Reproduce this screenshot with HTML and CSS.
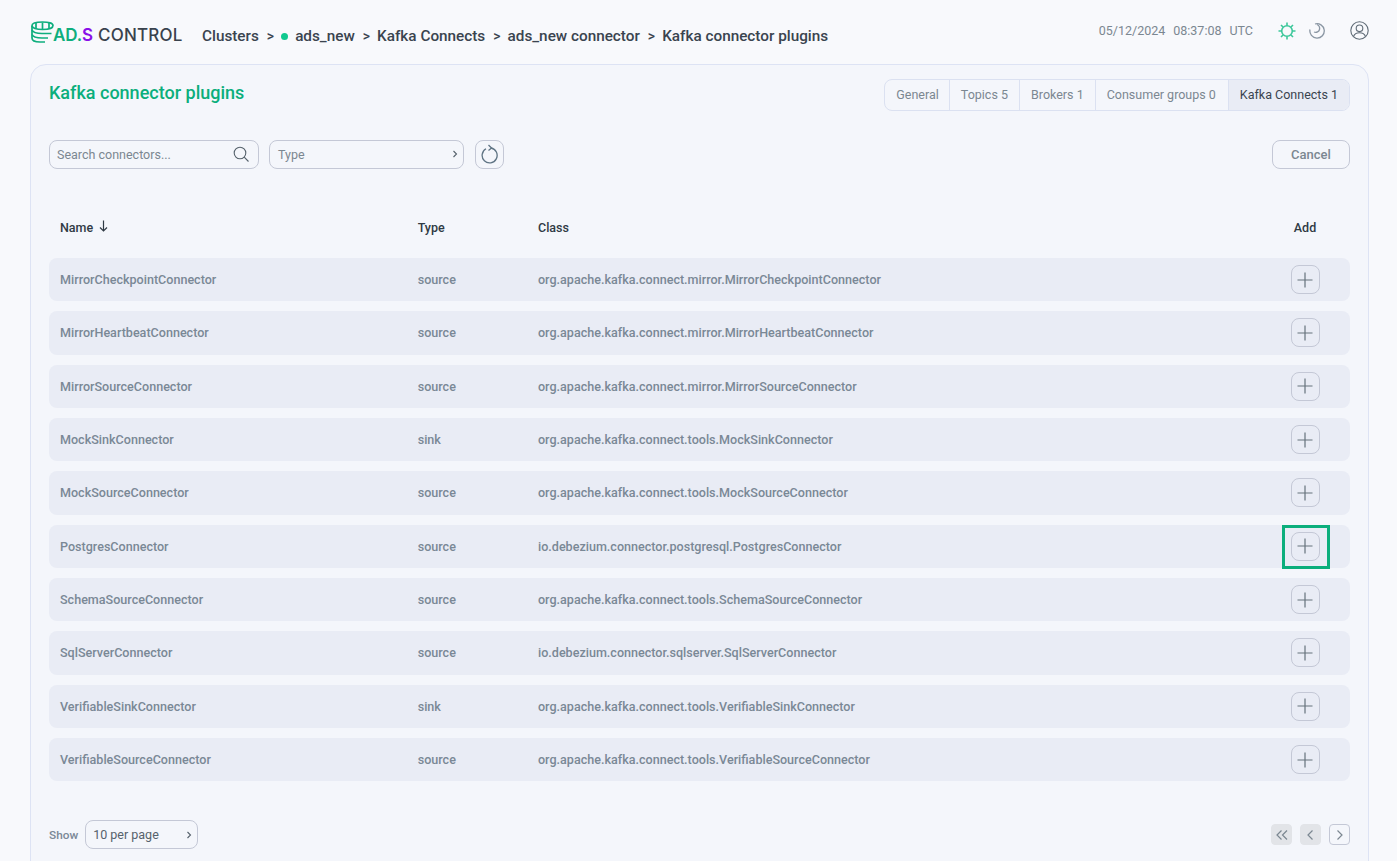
FILE: index.html
```html
<!DOCTYPE html>
<html lang="en">
<head>
    <meta charset="UTF-8">
    <meta name="viewport" content="width=device-width, initial-scale=1.0">
    <title>Kafka connector plugins</title>
    <link rel="stylesheet" href="styles.css">
</head>
<body>

<header class="header">
    <div class="logo">
        <svg class="logo-icon" width="23" height="22" viewBox="0 0 23 22" fill="none" stroke="#0fae7d" stroke-width="1.700">
            <path d="M1 4.500C1 2 5.500 1 11.500 1S22 2 22 4.500 17.500 8.500 11.500 8.500 1 7 1 4.500z"/>
            <path d="M5 2v5.500M11.500 1.500V8M18 2v5.500"/>
            <path d="M1 5v12c0 2.500 3.500 4 8 4h5"/>
            <path d="M1 9c1 2.500 5 3.500 10 3.500h9.500M1 13.500c1 2.500 5 3.500 10 3.500h6"/>
        </svg>
        <span class="logo-ad">AD.</span><span class="logo-s">S</span><span class="logo-control">CONTROL</span>
    </div>
    <nav class="crumbs">
        <span>Clusters</span><span class="sep">&gt;</span>
        <span class="status-dot"></span><span>ads_new</span><span class="sep">&gt;</span>
        <span>Kafka Connects</span><span class="sep">&gt;</span>
        <span>ads_new connector</span><span class="sep">&gt;</span>
        <span>Kafka connector plugins</span>
    </nav>
    <div class="header-right">
        <span class="clock">05/12/2024</span>
        <span class="clock">08:37:08</span>
        <span class="clock">UTC</span>
        <svg class="sun" width="18" height="18" viewBox="0 0 18 18" fill="none" stroke="#3cc79a" stroke-width="1.600">
            <circle cx="9" cy="9" r="5.300"/>
            <path d="M9 0.500V3.500M9 14.500v3M0.500 9H3.500M14.500 9h3M3 3l2 2M13 13l2 2M15 3l-2 2M5 13l-2 2"/>
        </svg>
        <svg class="moon" width="16" height="16" viewBox="0 0 16 16" fill="none" stroke="#8a96a3" stroke-width="1.300">
            <path d="M6 1a7.200 7.200 0 1 1-5 5.500"/>
            <path d="M8 1.500c2 1 3 3 2.500 5S7.500 10 5 9"/>
        </svg>
        <svg class="user" width="19" height="19" viewBox="0 0 19 19" fill="none" stroke="#5f6b76" stroke-width="1.100">
            <circle cx="9.500" cy="9.500" r="8.700"/>
            <circle cx="9.500" cy="7.300" r="3.300"/>
            <path d="M3.500 15.500c1-2.700 3.200-3.700 6-3.700s5 1 6 3.700"/>
        </svg>
    </div>
</header>

<main class="card">
    <div class="card-top">
        <h1>Kafka connector plugins</h1>
        <div class="tabs">
            <div class="tab">General</div>
            <div class="tab">Topics 5</div>
            <div class="tab">Brokers 1</div>
            <div class="tab">Consumer groups 0</div>
            <div class="tab tab-active">Kafka Connects 1</div>
        </div>
    </div>

    <div class="toolbar">
        <div class="field field-search">
            <span>Search connectors...</span>
            <svg width="16" height="16" viewBox="0 0 16 16" fill="none" stroke="#56626c" stroke-width="1.100">
                <circle cx="7" cy="7" r="5.800"/>
                <path d="M11.200 11.200 15.500 15.500"/>
            </svg>
        </div>
        <div class="field field-type">
            <span>Type</span>
            <svg class="chevron" width="6" height="8" viewBox="0 0 6 8" fill="none" stroke="#56626c" stroke-width="1.100"><path d="M1.500 1 4.500 4 1.500 7"/></svg>
        </div>
        <button class="icon-btn refresh">
            <svg width="18" height="20" viewBox="0 0 18 20" fill="none" stroke="#5f7484" stroke-width="1.300">
                <path d="M5 4.800A7.500 7.500 0 1 0 10 4"/>
                <path d="M7.500 1 10.500 4 7.500 6.500"/>
            </svg>
        </button>
        <button class="cancel">Cancel</button>
    </div>

    <div class="table-head">
        <div class="col-name">Name <svg class="sort" width="9" height="12" viewBox="0 0 9 12" fill="none" stroke="#2f3a44" stroke-width="1.200"><path d="M4.500 0.500V11M1 7.500 4.500 11 8 7.500"/></svg></div>
        <div class="col-type">Type</div>
        <div class="col-class">Class</div>
        <div class="col-add">Add</div>
    </div>

    <div class="rows">
        <div class="row">
            <div class="col-name">MirrorCheckpointConnector</div><div class="col-type">source</div>
            <div class="col-class">org.apache.kafka.connect.mirror.MirrorCheckpointConnector</div>
            <div class="col-add"><button class="add-btn"><svg width="16" height="16" viewBox="0 0 16 16" stroke="#66727c" stroke-width="1.200"><path d="M8 0.500V15.500M0.500 8H15.500"/></svg></button></div>
        </div>
        <div class="row">
            <div class="col-name">MirrorHeartbeatConnector</div><div class="col-type">source</div>
            <div class="col-class">org.apache.kafka.connect.mirror.MirrorHeartbeatConnector</div>
            <div class="col-add"><button class="add-btn"><svg width="16" height="16" viewBox="0 0 16 16" stroke="#66727c" stroke-width="1.200"><path d="M8 0.500V15.500M0.500 8H15.500"/></svg></button></div>
        </div>
        <div class="row">
            <div class="col-name">MirrorSourceConnector</div><div class="col-type">source</div>
            <div class="col-class">org.apache.kafka.connect.mirror.MirrorSourceConnector</div>
            <div class="col-add"><button class="add-btn"><svg width="16" height="16" viewBox="0 0 16 16" stroke="#66727c" stroke-width="1.200"><path d="M8 0.500V15.500M0.500 8H15.500"/></svg></button></div>
        </div>
        <div class="row">
            <div class="col-name">MockSinkConnector</div><div class="col-type">sink</div>
            <div class="col-class">org.apache.kafka.connect.tools.MockSinkConnector</div>
            <div class="col-add"><button class="add-btn"><svg width="16" height="16" viewBox="0 0 16 16" stroke="#66727c" stroke-width="1.200"><path d="M8 0.500V15.500M0.500 8H15.500"/></svg></button></div>
        </div>
        <div class="row">
            <div class="col-name">MockSourceConnector</div><div class="col-type">source</div>
            <div class="col-class">org.apache.kafka.connect.tools.MockSourceConnector</div>
            <div class="col-add"><button class="add-btn"><svg width="16" height="16" viewBox="0 0 16 16" stroke="#66727c" stroke-width="1.200"><path d="M8 0.500V15.500M0.500 8H15.500"/></svg></button></div>
        </div>
        <div class="row">
            <div class="col-name">PostgresConnector</div><div class="col-type">source</div>
            <div class="col-class">io.debezium.connector.postgresql.PostgresConnector</div>
            <div class="col-add"><button class="add-btn"><svg width="16" height="16" viewBox="0 0 16 16" stroke="#66727c" stroke-width="1.200"><path d="M8 0.500V15.500M0.500 8H15.500"/></svg></button><div class="highlight"></div></div>
        </div>
        <div class="row">
            <div class="col-name">SchemaSourceConnector</div><div class="col-type">source</div>
            <div class="col-class">org.apache.kafka.connect.tools.SchemaSourceConnector</div>
            <div class="col-add"><button class="add-btn"><svg width="16" height="16" viewBox="0 0 16 16" stroke="#66727c" stroke-width="1.200"><path d="M8 0.500V15.500M0.500 8H15.500"/></svg></button></div>
        </div>
        <div class="row">
            <div class="col-name">SqlServerConnector</div><div class="col-type">source</div>
            <div class="col-class">io.debezium.connector.sqlserver.SqlServerConnector</div>
            <div class="col-add"><button class="add-btn"><svg width="16" height="16" viewBox="0 0 16 16" stroke="#66727c" stroke-width="1.200"><path d="M8 0.500V15.500M0.500 8H15.500"/></svg></button></div>
        </div>
        <div class="row">
            <div class="col-name">VerifiableSinkConnector</div><div class="col-type">sink</div>
            <div class="col-class">org.apache.kafka.connect.tools.VerifiableSinkConnector</div>
            <div class="col-add"><button class="add-btn"><svg width="16" height="16" viewBox="0 0 16 16" stroke="#66727c" stroke-width="1.200"><path d="M8 0.500V15.500M0.500 8H15.500"/></svg></button></div>
        </div>
        <div class="row">
            <div class="col-name">VerifiableSourceConnector</div><div class="col-type">source</div>
            <div class="col-class">org.apache.kafka.connect.tools.VerifiableSourceConnector</div>
            <div class="col-add"><button class="add-btn"><svg width="16" height="16" viewBox="0 0 16 16" stroke="#66727c" stroke-width="1.200"><path d="M8 0.500V15.500M0.500 8H15.500"/></svg></button></div>
        </div>
    </div>

    <div class="pager">
        <span class="show-label">Show</span>
        <div class="field field-size">
            <span>10 per page</span>
            <svg class="chevron" width="6" height="8" viewBox="0 0 6 8" fill="none" stroke="#56626c" stroke-width="1.100"><path d="M1.500 1 4.500 4 1.500 7"/></svg>
        </div>
        <div class="page-btns">
            <button class="page-btn page-off"><svg width="12" height="10" viewBox="0 0 12 10" fill="none" stroke="#7b8791" stroke-width="1.200"><path d="M5.500 0.500 1 5 5.500 9.500M11 0.500 6.500 5 11 9.500"/></svg></button>
            <button class="page-btn page-off"><svg width="7" height="10" viewBox="0 0 7 10" fill="none" stroke="#7b8791" stroke-width="1.200"><path d="M5.500 0.500 1 5 5.500 9.500"/></svg></button>
            <button class="page-btn"><svg width="7" height="10" viewBox="0 0 7 10" fill="none" stroke="#7b8791" stroke-width="1.200"><path d="M1.500 0.500 6 5 1.500 9.500"/></svg></button>
        </div>
    </div>
</main>

</body>
</html>
```

FILE: styles.css
```css
* {
    box-sizing: border-box;
}
html, body {
    height: 100%;
}
body {
    margin: 0;
    height: 861px;
    overflow: hidden;
    background-color: #f8f9fc;
    font-family: Roboto, "Liberation Sans", sans-serif;
    font-size: 13px;
    font-weight: 500;
    color: #7a8896;
}
button {
    font-family: inherit;
    padding: 0;
    background: none;
    cursor: pointer;
}

.header {
    height: 64px;
    display: flex;
    align-items: flex-start;
    padding: 0 28px 0 31px;
}
.logo {
    width: 171px;
    height: 22px;
    margin-top: 21px;
    display: flex;
    align-items: flex-end;
    font-family: Inter, sans-serif;
    font-size: 17px;
    line-height: 18px;
    letter-spacing: -0.1px;
}
.logo-icon {
    margin-right: -1px;
    flex: none;
}
.logo-ad {
    color: #0fae7d;
    font-weight: 600;
    margin-bottom: -1px;
}
.logo-s {
    color: #8a10e8;
    font-weight: 600;
    margin-bottom: -1px;
}
.logo-control {
    color: #39424d;
    margin-left: 5px;
    margin-bottom: -1px;
    letter-spacing: 0.2px;
}
.crumbs {
    margin-top: 27px;
    display: flex;
    align-items: center;
    font-size: 15.300px;
    line-height: 18px;
    color: #3a444f;
}
.sep {
    margin: 0 7px 0 8px;
    font-size: 14px;
}
.status-dot {
    width: 7px;
    height: 7px;
    border-radius: 50%;
    background-color: #10c98f;
    margin: 0 7px 0 0;
}
.header-right {
    margin-left: auto;
    margin-top: 21px;
    display: flex;
    align-items: center;
    height: 19px;
}
.clock {
    font-size: 12.500px;
    font-weight: 400;
    color: #7b8791;
    margin-right: 8px;
}
.clock:nth-child(3) {
    margin-right: 0;
}
.sun {
    margin-left: 25px;
}
.moon {
    margin-left: 13px;
}
.user {
    margin-left: 25px;
}

.card {
    margin: 0 28px 0 30px;
    height: 830px;
    padding: 14px 18px 0;
    background-color: #f4f6fb;
    border: 1px solid #dde3f4;
    border-radius: 16px;
}
.card-top {
    display: flex;
    justify-content: space-between;
    align-items: flex-start;
    height: 60px;
}
h1 {
    margin: 3px 0 0;
    font-size: 18px;
    line-height: 22px;
    font-weight: 500;
    color: #0bae7c;
}
.tabs {
    display: flex;
    height: 32px;
    border: 1px solid #dbe1f1;
    border-radius: 8px;
    overflow: hidden;
}
.tab {
    padding: 0 11px;
    line-height: 30px;
    font-size: 12.500px;
    font-weight: 400;
    color: #7b8791;
    border-left: 1px solid #dbe1f1;
}
.tab:first-child {
    border-left: none;
    padding-right: 10px;
}
.tab:nth-child(4) {
    padding-right: 12px;
}
.tab-active {
    background-color: #e9ecf5;
    color: #3a444f;
}

.toolbar {
    display: flex;
    align-items: center;
    height: 30px;
}
.field {
    height: 29px;
    border: 1px solid #c4c8d6;
    border-radius: 8px;
    display: flex;
    align-items: center;
    justify-content: space-between;
    font-size: 12.500px;
    font-weight: 400;
    color: #7b8791;
    padding: 0 5px 0 8px;
}
.field-search {
    width: 210px;
    padding: 0 7px;
}
.field-search svg {
    margin-right: 2px;
}
.field-type {
    width: 195px;
    margin-left: 10px;
}
.icon-btn {
    width: 29px;
    height: 29px;
    margin-left: 11px;
    border: 1px solid #c4c8d6;
    border-radius: 8px;
    display: flex;
    align-items: center;
    justify-content: center;
}
.cancel {
    margin-left: auto;
    width: 78px;
    height: 29px;
    padding-top: 1px;
    border: 1px solid #c4c8d6;
    border-radius: 8px;
    font-size: 13px;
    font-weight: 500;
    color: #7b8791;
}

.table-head, .row {
    display: flex;
    align-items: center;
    padding-left: 11px;
}
.table-head {
    margin-top: 43px;
    height: 30px;
    color: #2f3a44;
    font-size: 12.500px;
}
.sort {
    margin-left: 3px;
}
.col-name {
    width: 357.700px;
    flex: none;
}
.col-type {
    width: 120.300px;
    flex: none;
}
.col-class {
    flex: 1;
}
.col-add {
    width: 90px;
    flex: none;
    display: flex;
    justify-content: center;
    position: relative;
}
.rows {
    margin-top: 16px;
    display: flex;
    flex-direction: column;
    gap: 10px;
}
.row {
    height: 43.330px;
    background-color: #e9ecf5;
    border-radius: 8px;
    font-size: 12.570px;
}
.add-btn {
    width: 29px;
    height: 29px;
    border: 1px solid #c4c8d6;
    border-radius: 8px;
    display: flex;
    align-items: center;
    justify-content: center;
}
.highlight {
    position: absolute;
    left: 22px;
    top: -7px;
    width: 48px;
    height: 44px;
    border: 3px solid #0bae7c;
}

.pager {
    display: flex;
    align-items: center;
    margin-top: 39px;
    height: 29px;
}
.show-label {
    font-size: 11.800px;
    margin-right: 7px;
}
.field-size {
    width: 113px;
    padding-left: 7px;
    color: #56626c;
}
.page-btns {
    margin-left: auto;
    display: flex;
    gap: 8px;
}
.page-btn {
    width: 21px;
    height: 21px;
    border: 1px solid #c4c8d6;
    border-radius: 4px;
    display: flex;
    align-items: center;
    justify-content: center;
}
.page-off {
    background-color: #e2e4e8;
    border-color: #e2e4e8;
}
```
